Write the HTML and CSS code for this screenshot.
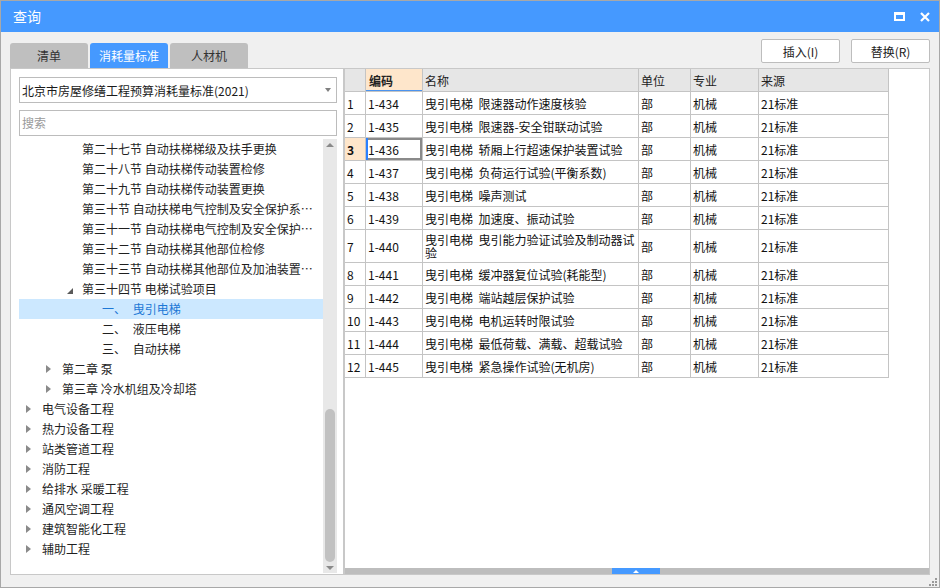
FILE: index.html
```html
<!DOCTYPE html>
<html lang="zh-CN">
<head>
<meta charset="utf-8">
<title>查询</title>
<link rel="stylesheet" href="styles.css">
</head>
<body>
<div class="window">
  <div class="titlebar">
    <span class="title">查询</span>
    <div class="win-controls">
      <span class="ctl-max"></span>
      <svg class="ctl-close" width="10" height="10" viewBox="0 0 10 10"><path d="M1 1 L9 9 M9 1 L1 9" stroke="#fff" stroke-width="2.2" fill="none"/></svg>
    </div>
  </div>
  <div class="content">
    <div class="toolbar">
      <div class="tabs">
        <div class="tab">清单</div>
        <div class="tab active">消耗量标准</div>
        <div class="tab">人材机</div>
      </div>
      <div class="actions">
        <button class="btn">插入(I)</button>
        <button class="btn">替换(R)</button>
      </div>
    </div>
    <div class="main">
      <div class="left-panel">
        <div class="select">
          <span class="select-text">北京市房屋修缮工程预算消耗量标准(2021)</span>
          <span class="select-arrow"></span>
        </div>
        <div class="search">搜索</div>
        <div class="tree-wrap">
          <div class="tree">
            <div class="node l3"><span class="tg"></span><span class="label">第二十七节 自动扶梯梯级及扶手更换</span></div>
            <div class="node l3"><span class="tg"></span><span class="label">第二十八节 自动扶梯传动装置检修</span></div>
            <div class="node l3"><span class="tg"></span><span class="label">第二十九节 自动扶梯传动装置更换</span></div>
            <div class="node l3"><span class="tg"></span><span class="label">第三十节 自动扶梯电气控制及安全保护系统检修</span></div>
            <div class="node l3"><span class="tg"></span><span class="label">第三十一节 自动扶梯电气控制及安全保护系统更换</span></div>
            <div class="node l3"><span class="tg"></span><span class="label">第三十二节 自动扶梯其他部位检修</span></div>
            <div class="node l3"><span class="tg"></span><span class="label">第三十三节 自动扶梯其他部位及加油装置更换</span></div>
            <div class="node l3"><span class="tg open"></span><span class="label">第三十四节 电梯试验项目</span></div>
            <div class="node l4 selected"><span class="tg"></span><span class="label">一、 曳引电梯</span></div>
            <div class="node l4"><span class="tg"></span><span class="label">二、 液压电梯</span></div>
            <div class="node l4"><span class="tg"></span><span class="label">三、 自动扶梯</span></div>
            <div class="node l2"><span class="tg closed"></span><span class="label">第二章 泵</span></div>
            <div class="node l2"><span class="tg closed"></span><span class="label">第三章 冷水机组及冷却塔</span></div>
            <div class="node l1"><span class="tg closed"></span><span class="label">电气设备工程</span></div>
            <div class="node l1"><span class="tg closed"></span><span class="label">热力设备工程</span></div>
            <div class="node l1"><span class="tg closed"></span><span class="label">站类管道工程</span></div>
            <div class="node l1"><span class="tg closed"></span><span class="label">消防工程</span></div>
            <div class="node l1"><span class="tg closed"></span><span class="label">给排水 采暖工程</span></div>
            <div class="node l1"><span class="tg closed"></span><span class="label">通风空调工程</span></div>
            <div class="node l1"><span class="tg closed"></span><span class="label">建筑智能化工程</span></div>
            <div class="node l1"><span class="tg closed"></span><span class="label">辅助工程</span></div>
          </div>
          <div class="vscroll">
            <div class="varrow up"><span></span></div>
            <div class="vtrack"><div class="vthumb"></div></div>
            <div class="varrow down"><span></span></div>
          </div>
        </div>
      </div>
      <div class="right-panel">
        <div class="grid">
          <div class="c hd corner"></div>
          <div class="c hd sortcol">编码</div>
          <div class="c hd">名称</div>
          <div class="c hd">单位</div>
          <div class="c hd">专业</div>
          <div class="c hd">来源</div>

          <div class="c rh">1</div><div class="c code">1-434</div><div class="c name">曳引电梯&nbsp; 限速器动作速度核验</div><div class="c">部</div><div class="c">机械</div><div class="c">21标准</div>
          <div class="c rh">2</div><div class="c code">1-435</div><div class="c name">曳引电梯&nbsp; 限速器-安全钳联动试验</div><div class="c">部</div><div class="c">机械</div><div class="c">21标准</div>
          <div class="c rh currow">3</div><div class="c code cur">1-436</div><div class="c name">曳引电梯&nbsp; 轿厢上行超速保护装置试验</div><div class="c">部</div><div class="c">机械</div><div class="c">21标准</div>
          <div class="c rh">4</div><div class="c code">1-437</div><div class="c name">曳引电梯&nbsp; 负荷运行试验(平衡系数)</div><div class="c">部</div><div class="c">机械</div><div class="c">21标准</div>
          <div class="c rh">5</div><div class="c code">1-438</div><div class="c name">曳引电梯&nbsp; 噪声测试</div><div class="c">部</div><div class="c">机械</div><div class="c">21标准</div>
          <div class="c rh">6</div><div class="c code">1-439</div><div class="c name">曳引电梯&nbsp; 加速度、振动试验</div><div class="c">部</div><div class="c">机械</div><div class="c">21标准</div>
          <div class="c rh">7</div><div class="c code">1-440</div><div class="c name wrap">曳引电梯&nbsp; 曳引能力验证试验及制动器试验</div><div class="c">部</div><div class="c">机械</div><div class="c">21标准</div>
          <div class="c rh">8</div><div class="c code">1-441</div><div class="c name">曳引电梯&nbsp; 缓冲器复位试验(耗能型)</div><div class="c">部</div><div class="c">机械</div><div class="c">21标准</div>
          <div class="c rh">9</div><div class="c code">1-442</div><div class="c name">曳引电梯&nbsp; 端站越层保护试验</div><div class="c">部</div><div class="c">机械</div><div class="c">21标准</div>
          <div class="c rh">10</div><div class="c code">1-443</div><div class="c name">曳引电梯&nbsp; 电机运转时限试验</div><div class="c">部</div><div class="c">机械</div><div class="c">21标准</div>
          <div class="c rh">11</div><div class="c code">1-444</div><div class="c name">曳引电梯&nbsp; 最低荷载、满载、超载试验</div><div class="c">部</div><div class="c">机械</div><div class="c">21标准</div>
          <div class="c rh">12</div><div class="c code">1-445</div><div class="c name">曳引电梯&nbsp; 紧急操作试验(无机房)</div><div class="c">部</div><div class="c">机械</div><div class="c">21标准</div>
        </div>
        <div class="grid-space"></div>
        <div class="hscroll"><div class="hthumb"><span></span></div></div>
      </div>
    </div>
    <div class="footer">
      <svg class="grip" width="8" height="8" viewBox="0 0 8 8">
        <rect x="6" y="0" width="2" height="2" fill="#9a9a9a"/>
        <rect x="3" y="3" width="2" height="2" fill="#9a9a9a"/>
        <rect x="6" y="3" width="2" height="2" fill="#9a9a9a"/>
        <rect x="0" y="6" width="2" height="2" fill="#9a9a9a"/>
        <rect x="3" y="6" width="2" height="2" fill="#9a9a9a"/>
        <rect x="6" y="6" width="2" height="2" fill="#9a9a9a"/>
      </svg>
    </div>
  </div>
</div>
</body>
</html>
```

FILE: styles.css
```css
* { box-sizing: border-box; }
html, body { margin: 0; padding: 0; }
body {
  width: 940px;
  height: 588px;
  overflow: hidden;
  font-family: "Noto Sans CJK SC", "Microsoft YaHei", sans-serif;
  font-size: 12px;
  color: #1f1f1f;
  background: #f0f0f0;
}
.window {
  width: 940px;
  height: 588px;
  border: 1px solid #a8a8a8;
  display: flex;
  flex-direction: column;
  background: #f0f0f0;
}
.titlebar {
  height: 31px;
  flex-shrink: 0;
  background: #4599ff;
  display: flex;
  align-items: center;
  justify-content: space-between;
  padding: 0 9px 0 12px;
  color: #fff;
}
.title { font-size: 14px; line-height: 31px; }
.win-controls { display: flex; align-items: center; gap: 15px; }
.ctl-max {
  width: 11px;
  height: 9px;
  border: 2px solid #fff;
  border-top-width: 3px;
}
.ctl-close { display: block; }

.content {
  flex: 1;
  display: flex;
  flex-direction: column;
  padding: 0 9px;
}
.toolbar {
  height: 36px;
  flex-shrink: 0;
  display: flex;
  justify-content: space-between;
}
.tabs { display: flex; align-items: flex-end; gap: 2px; }
.tab {
  width: 78px;
  height: 25px;
  background: #bfbfbf;
  color: #333;
  border-radius: 3px 3px 0 0;
  text-align: center;
  line-height: 25px;
  font-size: 12px;
}
.tab.active { background: #4599ff; color: #fff; }
.actions { display: flex; gap: 11px; padding-top: 7px; }
.btn {
  width: 79px;
  height: 24px;
  border: 1px solid #bdbdbd;
  border-radius: 2px;
  background: #fff;
  font-family: inherit;
  font-size: 12px;
  color: #222;
  padding: 0;
}

.main {
  height: 507px;
  flex-shrink: 0;
  display: flex;
}
.left-panel {
  width: 334px;
  flex-shrink: 0;
  background: #fff;
  border: 1px solid #c8c8c8;
  padding: 8px 6px 1px 8px;
  display: flex;
  flex-direction: column;
}
.select {
  height: 26px;
  border: 1px solid #bcbcbc;
  display: flex;
  align-items: center;
  justify-content: space-between;
  padding: 0 5px 0 2px;
}
.select-text { color: #1a1a1a; }
.select-arrow {
  width: 0; height: 0;
  border-left: 3.5px solid transparent;
  border-right: 3.5px solid transparent;
  border-top: 4px solid #808080;
}
.search {
  height: 26px;
  margin-top: 7px;
  border: 1px solid #bcbcbc;
  color: #9a9a9a;
  line-height: 24px;
  padding-left: 2px;
}
.tree-wrap {
  flex: 1;
  margin-top: 3px;
  display: flex;
  min-height: 0;
}
.tree { flex: 1; min-width: 0; }
.node {
  height: 20px;
  line-height: 20px;
  display: flex;
  align-items: center;
  padding-right: 8px;
  color: #1f1f1f;
}
.node.l1 { padding-left: 7px; }
.node.l2 { padding-left: 27px; }
.node.l3 { padding-left: 47px; }
.node.l4 { padding-left: 67px; }
.tg { width: 16px; flex-shrink: 0; height: 20px; display: flex; align-items: center; }
.tg.closed::before {
  content: "";
  width: 0; height: 0;
  border-left: 5px solid #8a8a8a;
  border-top: 4.5px solid transparent;
  border-bottom: 4.5px solid transparent;
}
.tg.open::before {
  content: "";
  width: 0; height: 0;
  margin-left: 1px;
  margin-top: 3px;
  border-right: 6px solid #5a5a5a;
  border-top: 6px solid transparent;
}
.label {
  white-space: nowrap;
  overflow: hidden;
  text-overflow: ellipsis;
}
.node.l4 .label { word-spacing: 4px; }
.node.selected { background: #cce8ff; color: #1d78d6; }

.vscroll {
  width: 14px;
  flex-shrink: 0;
  background: #e8e8e8;
  display: flex;
  flex-direction: column;
}
.varrow { height: 12px; display: flex; align-items: center; justify-content: center; }
.varrow span { width: 0; height: 0; border-left: 4px solid transparent; border-right: 4px solid transparent; }
.varrow.up span { border-bottom: 4px solid #8a8a8a; margin-top: 1px; }
.varrow.down span { border-top: 4px solid #8a8a8a; }
.vtrack { flex: 1; display: flex; flex-direction: column; align-items: center; }
.vthumb {
  width: 10px;
  height: 153px;
  margin-top: 259px;
  background: #c1c1c1;
  border-radius: 5px;
}

.right-panel {
  width: 586px;
  flex-shrink: 0;
  background: #fff;
  border: 1px solid #c8c8c8;
  display: flex;
  flex-direction: column;
}
.grid {
  display: grid;
  grid-template-columns: 21px 57px 216px 52px 68px 130px;
  grid-template-rows: 23px;
  grid-auto-rows: minmax(23px, auto);
  width: 544px;
}
.c {
  border-right: 1px solid #c4c4c4;
  border-bottom: 1px solid #c4c4c4;
  padding: 3px 2px;
  display: flex;
  align-items: center;
  line-height: 13px;
  white-space: nowrap;
  color: #111;
}
.c.hd { background: #e6e6e6; color: #222; }
.c.sortcol { background: #fee6cb; font-weight: bold; box-shadow: inset 0 -1px 0 #4b93ee; padding-left: 3px; }
.c.rh { background: #fff; padding-left: 2px; }
.c.rh.currow { background: #fee6cb; font-weight: bold; }
.c.cur { box-shadow: inset 2px 0 0 #2b80ff, inset 0 0 0 2px #8a8a8a; }
.c.name.wrap { white-space: normal; }
.grid-space { flex: 1; }
.hscroll {
  height: 6px;
  background: #bdbdbd;
  display: flex;
}
.hthumb {
  width: 48px;
  margin-left: 267px;
  background: #4599ff;
  display: flex;
  justify-content: center;
  align-items: flex-end;
}
.hthumb span {
  width: 0; height: 0;
  border-left: 3px solid transparent;
  border-right: 3px solid transparent;
  border-bottom: 3px solid #fff;
  margin-bottom: 1px;
}
.footer {
  flex: 1;
  display: flex;
  justify-content: flex-end;
  align-items: flex-end;
  padding-bottom: 1px;
  margin-right: -7px;
}
.grip { display: block; }
```
